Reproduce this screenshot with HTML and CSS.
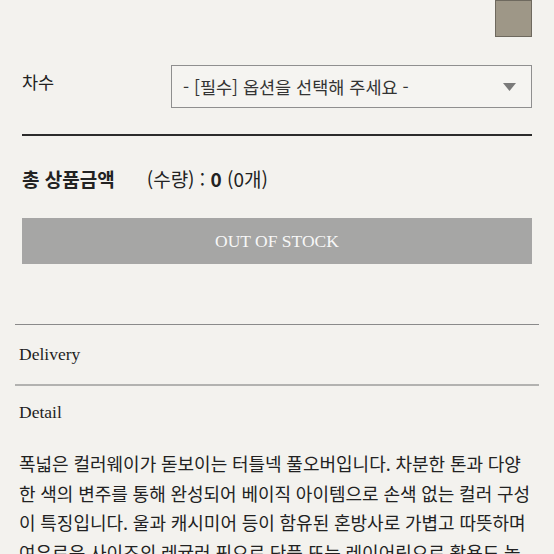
FILE: index.html
```html
<!DOCTYPE html>
<html lang="ko">
<head>
<meta charset="utf-8">
<title>상품 옵션</title>
<link rel="stylesheet" href="styles.css">
</head>
<body>
<div class="page">
  <div class="swatch-row">
    <div class="swatch"></div>
  </div>

  <div class="option-row">
    <div class="option-label">차수</div>
    <div class="select">
      <span class="select-text">- [필수] 옵션을 선택해 주세요 -</span>
      <svg class="select-arrow" width="13" height="8" viewBox="0 0 13 8"><polygon points="0,0 13,0 6.5,8" fill="#7a7a7a"/></svg>
    </div>
  </div>

  <div class="divider-thick"></div>

  <div class="total">
    <span class="total-label">총 상품금액</span>
    <span class="total-value">(수량) : <b>0</b> (0개)</span>
  </div>

  <div class="soldout">OUT OF STOCK</div>

  <div class="acc">
    <div class="acc-line"></div>
    <div class="acc-item acc-delivery">Delivery</div>
    <div class="acc-line acc-line-light"></div>
    <div class="acc-item acc-detail">Detail</div>
  </div>

  <p class="desc">폭넓은 컬러웨이가 돋보이는 터틀넥 풀오버입니다. 차분한 톤과 다양<br>한 색의 변주를 통해 완성되어 베이직 아이템으로 손색 없는 컬러 구성<br>이 특징입니다. 울과 캐시미어 등이 함유된 혼방사로 가볍고 따뜻하며<br>여유로운 사이즈의 레귤러 핏으로 단품 또는 레이어링으로 활용도 높<br>은 아이템입니다.</p>
</div>
</body>
</html>
```

FILE: styles.css
```css
html, body {
  margin: 0;
  padding: 0;
  background: #f3f2ee;
}

body {
  font-family: "Noto Sans CJK KR", "Noto Sans", sans-serif;
  color: #222;
}

.page {
  width: 554px;
  height: 554px;
  overflow: hidden;
}

.swatch-row {
  display: flex;
  justify-content: flex-end;
  padding: 0 22px;
  height: 37px;
}

.swatch {
  width: 35px;
  height: 35px;
  background: #9e9787;
  border: 1px solid #6e695e;
}

.option-row {
  display: flex;
  align-items: flex-start;
  justify-content: space-between;
  margin-top: 28px;
  padding: 0 22px;
}

.option-label {
  font-size: 17.5px;
  line-height: 24px;
  padding-top: 5px;
}

.select {
  box-sizing: border-box;
  width: 361px;
  height: 43px;
  border: 1px solid #8f8f8f;
  background: #f5f4f1;
  display: flex;
  align-items: center;
  justify-content: space-between;
  padding: 0 15px 0 11px;
}

.select-text {
  font-size: 17.5px;
  color: #333;
  line-height: 22px;
}

.select-arrow {
  display: block;
}

.divider-thick {
  margin: 26px 22px 0;
  height: 2px;
  background: #2b2b2b;
}

.total {
  display: flex;
  align-items: center;
  gap: 32px;
  padding: 30px 22px 0;
  line-height: 26px;
}

.total-label {
  font-size: 19px;
  font-weight: 700;
}

.total-value {
  font-size: 19px;
}

.total-value b {
  font-weight: 700;
}

.soldout {
  margin: 26px 22px 0;
  height: 46px;
  background: #a6a6a5;
  color: #f7f7f7;
  font-family: "Liberation Serif", serif;
  font-size: 17.5px;
  display: flex;
  align-items: center;
  justify-content: center;
}

.acc {
  margin-top: 60px;
  padding: 0 15px;
}

.acc-line {
  height: 1px;
  background: #8a8a8a;
}

.acc-line-light {
  height: 2px;
  background: #b2b2b0;
}

.acc-item {
  font-family: "Liberation Serif", serif;
  font-size: 17.5px;
  color: #1e1e1e;
  padding-left: 4px;
}

.acc-delivery {
  height: 59px;
  display: flex;
  align-items: center;
}

.acc-detail {
  padding-top: 14px;
  line-height: 24px;
}

.desc {
  margin: 25px 0 0;
  padding: 0 10px 0 19px;
  font-size: 18px;
  word-spacing: -0.3px;
  line-height: 29.5px;
  white-space: nowrap;
  color: #222;
}
```
